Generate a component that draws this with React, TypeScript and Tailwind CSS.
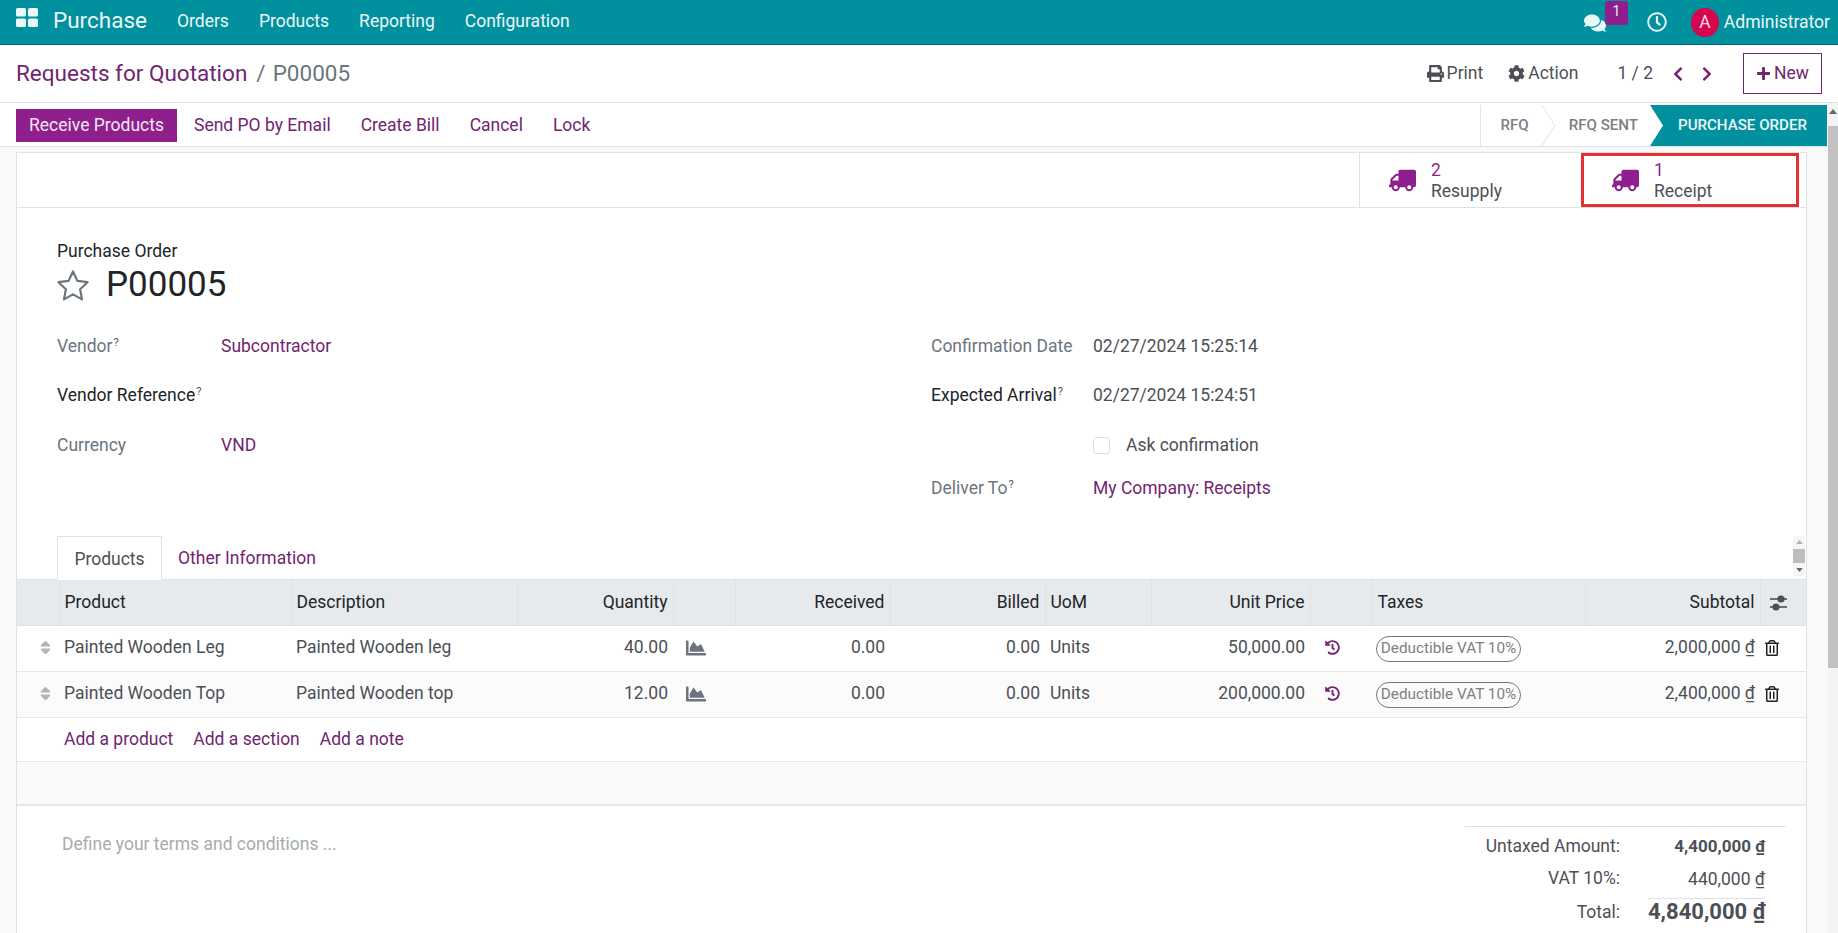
import React from "react";
import {
  FaTruck, FaPrint, FaCog, FaPlus, FaChevronLeft, FaChevronRight, FaComments,
  FaRegClock, FaSort, FaChartArea, FaHistory, FaRegTrashAlt,
} from "react-icons/fa";

const rows = [
  { name: "Painted Wooden Leg", desc: "Painted Wooden leg", qty: "40.00", price: "50,000.00", sub: "2,000,000", bg: "bg-white" },
  { name: "Painted Wooden Top", desc: "Painted Wooden top", qty: "12.00", price: "200,000.00", sub: "2,400,000", bg: "bg-[#fbfbfb]" },
];

function Q() {
  return <sup className="text-[11px] ml-[1px] text-[#555] top-[-6px]">?</sup>;
}

function SmartButton({ n, label, className }: { n: string; label: string; className: string }) {
  return (
    <div className={`h-full flex items-center ${className}`}>
      <FaTruck className="text-[#8f1f8c] text-[27px] -scale-x-100 shrink-0" />
      <div className="ml-[15px] leading-[21px] pt-[2px]">
        <div className="text-[#8f1f8c]">{n}</div>
        <div className="text-[#4c5056]">{label}</div>
      </div>
    </div>
  );
}

export default function App() {
  return (
    <div className="h-[933px] w-full overflow-hidden flex flex-col bg-white text-[17.5px] text-[#4c5056] font-['Roboto',sans-serif]">
      {/* Nav */}
      <header className="h-[45px] shrink-0 bg-[#01909e] border-b border-[#02636d] flex items-center text-[#ecf6f7]">
        <svg viewBox="0 0 22 19" className="w-[22px] h-[19px] ml-[16px] -mt-[9px] fill-[#e8f7f8]">
          <rect x="0" y="0" width="10" height="8.5" rx="1.6" />
          <rect x="12" y="0" width="10" height="8.5" rx="1.6" />
          <rect x="0" y="10.5" width="10" height="8.5" rx="1.6" />
          <rect x="12" y="10.5" width="10" height="8.5" rx="1.6" />
        </svg>
        <span className="text-[22.5px] ml-[15px] mr-[30px] -mt-[2px]">Purchase</span>
        <nav className="flex gap-[30px] -mt-[1px]">
          <span>Orders</span>
          <span>Products</span>
          <span>Reporting</span>
          <span>Configuration</span>
        </nav>
        <div className="ml-auto flex items-center h-full relative">
          <FaComments className="text-[22px] text-[#e8f7f8] mr-[41px] mt-[2px]" />
          <span className="absolute left-[21px] top-[1px] w-[23px] h-[24px] rounded-[3px] bg-[#8f1f8c] text-center text-[14px] leading-[20px] text-[#eee]">1</span>
          <FaRegClock className="text-[20px] mr-[24px]" />
          <span className="w-[28px] h-[29px] rounded-full bg-[#d6064e] text-center leading-[29px] text-[#f3dbe3] mr-[5px]">A</span>
          <span className="mr-[8px]">Administrator</span>
        </div>
      </header>

      {/* Title row */}
      <div className="h-[58px] shrink-0 border-b border-[#dee2e6] flex items-center pl-[16px] pr-[16px]">
        <span className="text-[22.5px] text-[#71256f]">Requests for Quotation</span>
        <span className="text-[22.5px] text-[#6c757d] ml-[9px]">/</span>
        <span className="text-[22.5px] text-[#6c757d] ml-[7px]">P00005</span>
        <div className="ml-auto flex items-center">
          <FaPrint className="text-[17px] mr-[3px] text-[#4c5056]" />
          <span className="mr-[25px]">Print</span>
          <FaCog className="text-[17px] mr-[3px] text-[#4c5056]" />
          <span className="mr-[39px]">Action</span>
          <span className="mr-[17px]">1 / 2</span>
          <FaChevronLeft className="text-[#71256f] text-[16px] mr-[13px]" />
          <FaChevronRight className="text-[#71256f] text-[16px] mr-[28px]" />
          <div className="w-[79px] h-[41px] border border-[#71256f] flex items-center justify-center text-[#71256f]">
            <FaPlus className="text-[15px] mr-[3px]" />
            New
          </div>
        </div>
      </div>

      <div className="flex-1 min-h-0 flex">
        <main className="flex-1 min-w-0 bg-[#f8f9fa] flex flex-col">
          {/* Action bar */}
          <div className="h-[44px] shrink-0 bg-white border-b border-[#dee2e6] flex items-center justify-between pl-[16px] pr-[1px]">
            <div className="flex items-center text-[#71256f] mt-[1px]">
              <span className="h-[33px] w-[161px] bg-[#8f1f8c] text-[#f3e6f2] flex items-center justify-center mr-[17px]">Receive Products</span>
              <span className="mr-[30px]">Send PO by Email</span>
              <span className="mr-[30px]">Create Bill</span>
              <span className="mr-[30px]">Cancel</span>
              <span>Lock</span>
            </div>
            <div className="flex items-center h-[41px] self-end text-[15.1px] font-medium text-[#7b7f84] border-l border-[#e3e5e8] pl-[19px]">
              <span>RFQ</span>
              <svg viewBox="0 0 14 41" className="w-[14px] h-[41px] ml-[13px] mr-[13px] fill-none stroke-[#dfe2e5]">
                <path d="M0 0 L13 20.5 L0 41" />
              </svg>
              <span>RFQ SENT</span>
              <div className="ml-[12px] w-[177px] h-full bg-[#01909e] text-[#eef8f9] flex items-center pl-[28px] [clip-path:polygon(0_0,100%_0,100%_100%,0_100%,13px_50%)]">
                PURCHASE ORDER
              </div>
            </div>
          </div>

          {/* Card */}
          <section className="mt-[5px] ml-[16px] mr-[21px] flex-1 min-h-0 overflow-hidden bg-white border border-b-0 border-[#dee2e6]">
            <div className="h-[55px] border-b border-[#dee2e6] flex justify-end pr-[7px]">
              <SmartButton n="2" label="Resupply" className="w-[222px] pl-[29px] border-l border-[#dee2e6]" />
              <SmartButton n="1" label="Receipt" className="w-[218px] pl-[28px] border-[3px] border-[#e53030]" />
            </div>

            <div className="pl-[40px] pt-[33px]">
              <div className="leading-[21px] text-[#212529]">Purchase Order</div>
              <div className="flex items-center h-[43px] mt-[2px]">
                <svg viewBox="0 0 34 33" className="w-[34px] h-[33px] fill-none stroke-[#6c757d] stroke-[2.2] [stroke-linejoin:round] -ml-[1px]">
                  <path d="M17 2.5 L21.4 11.9 L31.6 13.2 L24.1 20.2 L26 30.4 L17 25.4 L8 30.4 L9.9 20.2 L2.4 13.2 L12.6 11.9 Z" />
                </svg>
                <h1 className="text-[35px] ml-[16px] text-[#212529]">P00005</h1>
              </div>
            </div>

            <div className="ml-[40px] mt-[15px] grid grid-cols-[874px_1fr]">
              <div className="grid grid-cols-[164px_1fr] grid-rows-[48px_50px_50px] items-center">
                <span className="text-[#6c757d]">Vendor<Q /></span>
                <span className="text-[#71256f]">Subcontractor</span>
                <span className="text-[#212529] col-span-2">Vendor Reference<Q /></span>
                <span className="text-[#6c757d]">Currency</span>
                <span className="text-[#71256f]">VND</span>
              </div>
              <div className="grid grid-cols-[162px_1fr] grid-rows-[48px_50px_50px_36px] items-center">
                <span className="text-[#6c757d]">Confirmation Date</span>
                <span>02/27/2024 15:25:14</span>
                <span className="text-[#212529]">Expected Arrival<Q /></span>
                <span>02/27/2024 15:24:51</span>
                <span className="col-start-2 flex items-center">
                  <span className="w-[17px] h-[17px] border border-[#dee2e6] rounded-[3px] mr-[16px]" />
                  Ask confirmation
                </span>
                <span className="col-start-1 text-[#6c757d]">Deliver To<Q /></span>
                <span className="text-[#71256f]">My Company: Receipts</span>
              </div>
            </div>

            {/* Tabs */}
            <div className="mt-[30px] h-[43px] flex justify-between pl-[40px] pr-[1px]">
              <div className="flex">
                <span className="h-[44px] w-[105px] pt-[1px] border border-b-0 border-[#dee2e6] bg-white flex items-center justify-center relative z-10">Products</span>
                <span className="ml-[16px] pt-[1px] text-[#71256f] flex items-center">Other Information</span>
              </div>
              <div className="w-[12px] h-[40px] bg-[#f5f5f5] flex flex-col items-center justify-between text-[#777] py-[1px]">
                <svg viewBox="0 0 8 5" className="w-[7px] h-[4px] mt-[3px] fill-[#b0b0b0]"><path d="M4 0 L8 5 L0 5Z" /></svg>
                <div className="w-full h-[14px] bg-[#bdbdbd]" />
                <svg viewBox="0 0 8 5" className="w-[7px] h-[4px] mb-[3px] fill-[#666]"><path d="M0 0 L8 0 L4 5Z" /></svg>
              </div>
            </div>

            {/* Table */}
            <table className="w-full table-fixed border-collapse">
              <colgroup>
                <col className="w-[42px]" />
                <col className="w-[232px]" />
                <col className="w-[226px]" />
                <col className="w-[156px]" />
                <col className="w-[62px]" />
                <col className="w-[155px]" />
                <col className="w-[155px]" />
                <col className="w-[106px]" />
                <col className="w-[159px]" />
                <col className="w-[62px]" />
                <col className="w-[213px]" />
                <col className="w-[175px]" />
                <col />
              </colgroup>
              <thead>
                <tr className="h-[46px] bg-[#e7eaed] text-[#212529] border-y border-[#dee2e6] [&>th]:font-normal [&>th]:px-[5px] [&>th+th]:border-l [&>th+th]:border-[#dee2e6]">
                  <th />
                  <th className="text-left">Product</th>
                  <th className="text-left">Description</th>
                  <th className="text-right">Quantity</th>
                  <th />
                  <th className="text-right">Received</th>
                  <th className="text-right">Billed</th>
                  <th className="text-left">UoM</th>
                  <th className="text-right">Unit Price</th>
                  <th />
                  <th className="text-left">Taxes</th>
                  <th className="text-right">Subtotal</th>
                  <th>
                    <svg viewBox="0 0 17 16" className="w-[17px] h-[16px] ml-[4px] text-[#4c5056]">
                      <rect x="0" y="3.2" width="17" height="1.6" fill="currentColor" />
                      <circle cx="11" cy="4" r="3.6" fill="currentColor" />
                      <rect x="0" y="11.2" width="17" height="1.6" fill="currentColor" />
                      <circle cx="6" cy="12" r="3.6" fill="currentColor" />
                    </svg>
                  </th>
                </tr>
              </thead>
              <tbody>
                {rows.map((r) => (
                  <tr key={r.name} className={`h-[46px] border-b border-[#e5e7eb] ${r.bg} [&>td]:px-[5px] [&>td]:pb-[2px]`}>
                    <td className="text-center"><FaSort className="text-[#b0b5bb] text-[17px] ml-[15px]" /></td>
                    <td>{r.name}</td>
                    <td>{r.desc}</td>
                    <td className="text-right">{r.qty}</td>
                    <td><FaChartArea className="text-[20px] text-[#6c757d] ml-[8px]" /></td>
                    <td className="text-right">0.00</td>
                    <td className="text-right">0.00</td>
                    <td>Units</td>
                    <td className="text-right">{r.price}</td>
                    <td><FaHistory className="text-[15px] text-[#71256f] ml-[10px]" /></td>
                    <td>
                      <span className="inline-flex items-center justify-center h-[26px] w-[145px] mt-[2px] rounded-full border border-[#777] text-[15.3px] text-[#808080] -ml-[1px]">Deductible VAT 10%</span>
                    </td>
                    <td className="text-right">{r.sub} <span className="underline">₫</span></td>
                    <td><FaRegTrashAlt className="text-[16px] text-[#212529] -ml-[1px]" /></td>
                  </tr>
                ))}
                <tr className="h-[44px] border-b border-[#e5e7eb] bg-white">
                  <td />
                  <td colSpan={12} className="px-[5px] text-[#71256f]">
                    <span className="mr-[20px]">Add a product</span>
                    <span className="mr-[20px]">Add a section</span>
                    <span>Add a note</span>
                  </td>
                </tr>
              </tbody>
            </table>
            <div className="h-[44px] bg-[#fafafa] border-b-2 border-[#e5e7eb]" />

            {/* Footer */}
            <div className="flex justify-between pl-[45px] pr-[20px]">
              <div className="pt-[25px] text-[#a8abae]">Define your terms and conditions ...</div>
              <div className="mt-[20px] w-[321px] border-t border-[#dee2e6] pt-[3px] grid grid-cols-[155px_145px] grid-rows-[32px_36px_26px] items-center text-right">
                <span>Untaxed Amount:</span>
                <span className="font-bold text-[17px] pt-[1px]">4,400,000 <span className="underline">₫</span></span>
                <span className="-mt-[3px]">VAT 10%:</span>
                <span className="-mt-[1px]">440,000 <span className="underline">₫</span></span>
                <span className="self-end leading-[26px] mb-[-1px]">Total:</span>
                <span className="self-end leading-[26px] mb-[-1px] ml-[28px] border-t border-[#dee2e6] text-[22px] font-bold whitespace-nowrap">4,840,000 <span className="underline">₫</span></span>
              </div>
            </div>
          </section>
        </main>

        {/* Page scrollbar */}
        <aside className="w-[10px] shrink-0 bg-[#f3f3f3] flex flex-col items-center">
          <svg viewBox="0 0 8 5" className="w-[8px] h-[5px] mt-[6px] mb-[12px] fill-[#666]"><path d="M4 0 L8 5 L0 5Z" /></svg>
          <div className="w-full h-[542px] bg-[#c1c1c1]" />
        </aside>
      </div>
    </div>
  );
}
